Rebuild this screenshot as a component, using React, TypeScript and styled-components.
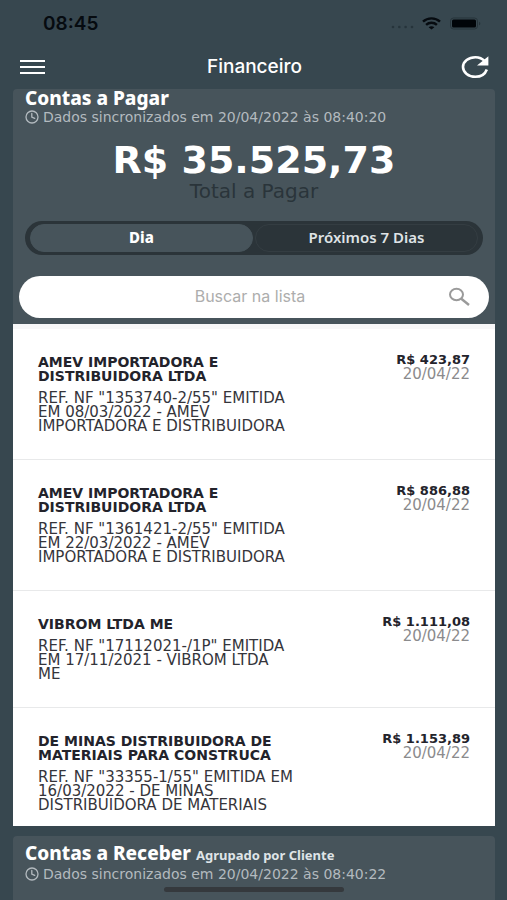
import React from "react";
import styled, { createGlobalStyle } from "styled-components";

const GlobalStyle = createGlobalStyle`
  *, *::before, *::after { box-sizing: border-box; }
  html { background: #37474f; }
  body {
    margin: 0;
    background: #37474f;
    font-family: "Noto Sans", sans-serif;
    color: #fff;
  }
  h1, h2, h3, p, ul { margin: 0; padding: 0; }
  button { font: inherit; cursor: pointer; }
`;

const Screen = styled.div`
  position: relative;
  height: 100vh;
  overflow: hidden;
  display: flex;
  flex-direction: column;
`;

const StatusBar = styled.div`
  flex: none;
  display: flex;
  align-items: center;
  justify-content: space-between;
  height: 45px;
  padding: 2px 26px 0 43px;
  color: #060b10;
  font: 600 19px/20px Inter, sans-serif;
`;

const StatusIcons = styled.div`
  display: flex;
  align-items: center;
  gap: 8px;
`;

const Header = styled.header`
  flex: none;
  display: grid;
  grid-template-columns: 1fr auto 1fr;
  align-items: center;
  height: 44px;
  padding: 0 17px 0 19px;
`;

const Title = styled.h1`
  font: 500 19px/24px Inter, sans-serif;
`;

const IconButton = styled.button<{ $end?: boolean }>`
  display: flex;
  justify-self: ${(p) => (p.$end ? "end" : "start")};
  padding: 0;
  border: 0;
  background: none;
  color: #fff;
`;

const Content = styled.main`
  flex: 1;
  min-height: 0;
  display: flex;
  flex-direction: column;
  gap: 10px;
  margin: 0 12px 0 13px;
`;

const Card = styled.section<{ $fill?: boolean }>`
  flex: ${(p) => (p.$fill ? "1 0 auto" : "none")};
  border-radius: 4px 4px 0 0;
  background: #47545b;
`;

const CardHead = styled.div<{ $top: number }>`
  padding: ${(p) => p.$top}px 12px 0;
`;

const CardTitle = styled.h2`
  font-size: 19px;
  line-height: 19px;
  font-weight: 800;
`;

const Grouping = styled.small`
  font-size: 13px;
  font-weight: 700;
  color: #dfe4e7;
`;

const Sync = styled.p`
  display: flex;
  align-items: center;
  gap: 4px;
  font-family: "DejaVu Sans", sans-serif;
  font-size: 14px;
  line-height: 18px;
  color: #b3babf;
`;

const Total = styled.div`
  display: flex;
  flex-direction: column;
  align-items: center;
  padding-top: 14px;
  font-family: "DejaVu Sans", sans-serif;
`;

const Amount = styled.strong`
  font-size: 38px;
  line-height: 40px;
`;

const AmountLabel = styled.span`
  font-size: 20px;
  line-height: 22px;
  color: #2a343a;
`;

const Segments = styled.div`
  display: grid;
  grid-template-columns: 1fr 1fr;
  gap: 2px;
  height: 34px;
  margin: 19px 12px 0;
  padding: 3px 5px;
  border-radius: 17px;
  background: #2b3439;
`;

const Segment = styled.button<{ $active?: boolean }>`
  padding: 0 0 2px;
  border: 1px solid ${(p) => (p.$active ? "#47545b" : "#343d42")};
  border-radius: 14px;
  background: ${(p) => (p.$active ? "#47545b" : "transparent")};
  color: ${(p) => (p.$active ? "#fff" : "#dfe3e5")};
  font-size: 15px;
  line-height: 18px;
  font-weight: ${(p) => (p.$active ? 800 : 600)};
`;

const Search = styled.label`
  position: relative;
  display: block;
  margin: 21px 6px 0;
  padding-bottom: 6px;
`;

const SearchInput = styled.input`
  display: block;
  width: 100%;
  height: 42px;
  padding: 0 52px 2px 44px;
  border: 0;
  border-radius: 21px;
  background: #fff;
  color: #333;
  font: 400 16px/20px Inter, sans-serif;
  text-align: center;
  &::placeholder { color: #adadad; opacity: 1; }
`;

const SearchIcon = styled.svg`
  position: absolute;
  top: 11px;
  right: 18px;
`;

const List = styled.ul`
  list-style: none;
  border-top: 5px solid #f7f7f8;
  background: #fff;
  font-family: "DejaVu Sans", sans-serif;
`;

const Row = styled.li`
  display: flex;
  justify-content: space-between;
  padding: 26px 25px;
  border-bottom: 1px solid #e8e9ea;
  color: #23232b;
  font-size: 15px;
  line-height: 14px;
  &:last-child { padding-bottom: 14px; border-bottom: 0; }
`;

const Details = styled.div`
  width: 60%;
`;

const Name = styled.h3`
  margin-bottom: 8px;
  font-size: 14px;
  line-height: 14px;
  font-weight: 700;
  white-space: pre;
`;

const Description = styled.p`
  color: #35353b;
  white-space: pre;
`;

const Value = styled.div`
  display: flex;
  flex-direction: column;
  align-items: flex-end;
  margin-top: -3px;
  line-height: 15px;
  white-space: nowrap;
`;

const Price = styled.strong`
  font-size: 13px;
  font-weight: 700;
`;

const Due = styled.time`
  font-size: 15px;
  color: #8b8b8d;
`;

const HomeIndicator = styled.div`
  position: absolute;
  left: 50%;
  bottom: 8px;
  width: 180px;
  height: 5px;
  border-radius: 3px;
  background: #35393d;
  transform: translateX(-50%);
`;

const entries = [
  {
    name: "AMEV IMPORTADORA E\nDISTRIBUIDORA LTDA",
    text: 'REF. NF "1353740-2/55" EMITIDA\nEM 08/03/2022 - AMEV\nIMPORTADORA E DISTRIBUIDORA',
    price: "R$ 423,87",
  },
  {
    name: "AMEV IMPORTADORA E\nDISTRIBUIDORA LTDA",
    text: 'REF. NF "1361421-2/55" EMITIDA\nEM 22/03/2022 - AMEV\nIMPORTADORA E DISTRIBUIDORA',
    price: "R$ 886,88",
  },
  {
    name: "VIBROM LTDA ME",
    text: 'REF. NF "17112021-/1P" EMITIDA\nEM 17/11/2021 - VIBROM LTDA\nME',
    price: "R$ 1.111,08",
  },
  {
    name: "DE MINAS DISTRIBUIDORA DE\nMATERIAIS PARA CONSTRUCA",
    text: 'REF. NF "33355-1/55" EMITIDA EM\n16/03/2022 - DE MINAS\nDISTRIBUIDORA DE MATERIAIS',
    price: "R$ 1.153,89",
  },
];

function SyncLine({ time }: { time: string }) {
  return (
    <Sync>
      <svg width="14" height="14" viewBox="0 0 14 14" fill="none" stroke="currentColor" strokeWidth="1.3" strokeLinecap="round" aria-hidden="true">
        <circle cx="7" cy="7" r="6" />
        <path d="M6.8 3.4V7l2.9 1.4" />
      </svg>
      Dados sincronizados em 20/04/2022 às {time}
    </Sync>
  );
}

export default function App() {
  return (
    <Screen>
      <GlobalStyle />
      <StatusBar>
        <span>08:45</span>
        <StatusIcons>
          <svg width="23" height="13" viewBox="0 0 23 13" fill="#26343b" aria-hidden="true">
            <circle cx="2" cy="10" r="1.3" />
            <circle cx="8.3" cy="10" r="1.3" />
            <circle cx="14.6" cy="10" r="1.3" />
            <circle cx="21" cy="10" r="1.3" />
          </svg>
          <svg width="19" height="13" viewBox="0 0 19 13" fill="none" stroke="currentColor" strokeWidth="2.4" aria-hidden="true">
            <path d="M1 4.7C5.7.2 13.3.2 18 4.7" />
            <path d="M4.1 7.9c3-2.8 7.8-2.8 10.8 0" />
            <path d="M9.5 12.6 6.6 10.3c1.6-1.5 4.2-1.5 5.8 0z" fill="currentColor" stroke="none" />
          </svg>
          <svg width="32" height="13" viewBox="0 0 32 13" aria-hidden="true">
            <rect x="1.5" y="1" width="27" height="11" rx="3" fill="none" stroke="#27343b" />
            <rect x="3" y="2.5" width="24" height="8" rx="1.5" fill="#000408" />
            <path d="M30 4.7c1.8.5 1.8 3.1 0 3.6z" fill="#27343b" />
          </svg>
        </StatusIcons>
      </StatusBar>
      <Header>
        <IconButton aria-label="Menu">
          <svg width="27" height="16" viewBox="0 0 27 16" stroke="currentColor" strokeWidth="2" aria-hidden="true">
            <path d="M1 2h25M1 8h25M1 14h25" />
          </svg>
        </IconButton>
        <Title>Financeiro</Title>
        <IconButton $end aria-label="Atualizar">
          <svg width="30" height="24" viewBox="0 0 30 24" fill="none" aria-hidden="true">
            <path d="M26.8 14.5C25.2 18.900 20.800 21.800 15.400 21.800 8.600 21.800 3 17.400 3 12S8.600 2.200 15.400 2.200c3.800 0 7 1.400 9.400 3.900" stroke="currentColor" strokeWidth="2.6" />
            <path d="M28.400 1.200V10.500H17z" fill="currentColor" />
          </svg>
        </IconButton>
      </Header>
      <Content>
        <div>
          <Card>
            <CardHead $top={0}>
              <CardTitle>Contas a Pagar</CardTitle>
              <SyncLine time="08:40:20" />
            </CardHead>
            <Total>
              <Amount>R$ 35.525,73</Amount>
              <AmountLabel>Total a Pagar</AmountLabel>
            </Total>
            <Segments>
              <Segment $active aria-pressed="true">Dia</Segment>
              <Segment aria-pressed="false">Próximos 7 Dias</Segment>
            </Segments>
            <Search>
              <SearchInput type="text" placeholder="Buscar na lista" aria-label="Buscar na lista" />
              <SearchIcon width="23" height="19" viewBox="0 0 23 19" fill="none" stroke="#9a9a9a" strokeWidth="2" aria-hidden="true">
                <ellipse cx="8.500" cy="7.500" rx="6.500" ry="5.800" />
                <path d="m13 11.500 8 6.500" strokeWidth="2.400" />
              </SearchIcon>
            </Search>
          </Card>
          <List>
            {entries.map((e, i) => (
              <Row key={i}>
                <Details>
                  <Name>{e.name}</Name>
                  <Description>{e.text}</Description>
                </Details>
                <Value>
                  <Price>{e.price}</Price>
                  <Due dateTime="2022-04-20">20/04/22</Due>
                </Value>
              </Row>
            ))}
          </List>
        </div>
        <Card $fill>
          <CardHead $top={8}>
            <CardTitle>
              Contas a Receber <Grouping>Agrupado por Cliente</Grouping>
            </CardTitle>
            <SyncLine time="08:40:22" />
          </CardHead>
        </Card>
      </Content>
      <HomeIndicator />
    </Screen>
  );
}
